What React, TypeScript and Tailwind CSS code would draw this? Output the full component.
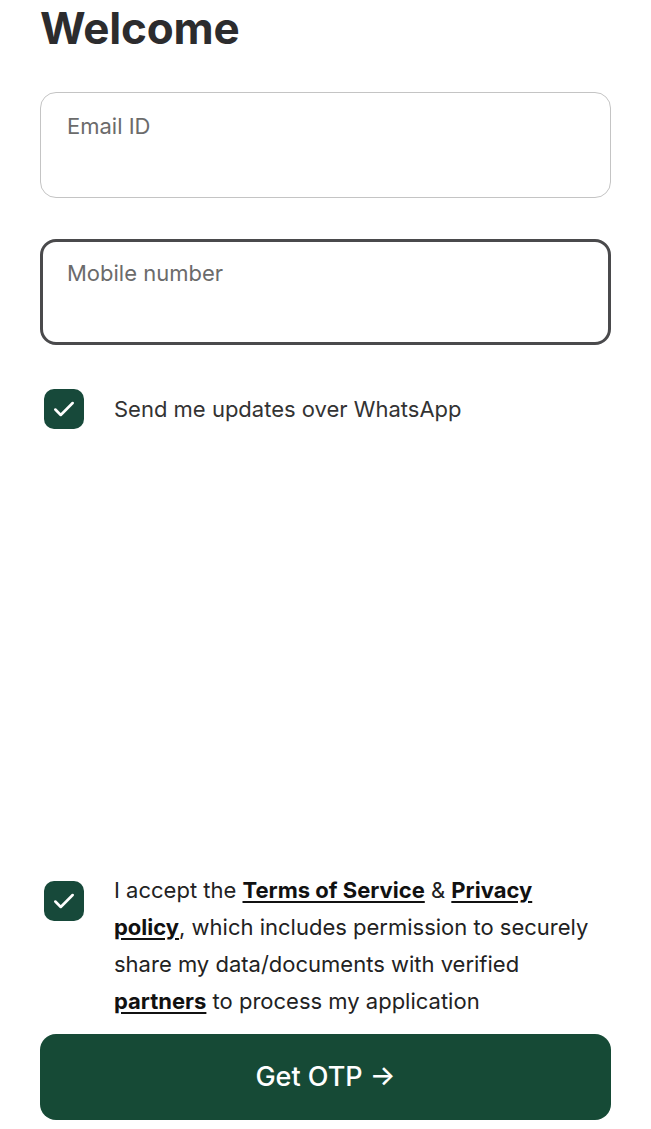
import React, { useState } from "react";

function CheckBox({ checked, onToggle }: { checked: boolean; onToggle: () => void }) {
  return (
    <button
      type="button"
      onClick={onToggle}
      className={`w-[40px] h-[40px] shrink-0 rounded-[10px] flex items-center justify-center ${
        checked ? "bg-[#17493a]" : "border-2 border-[#555] bg-white"
      }`}
    >
      {checked && (
        <svg width="26" height="26" viewBox="0 0 24 24" fill="none">
          <path
            d="M4 12.5l5 5L20 6.5"
            stroke="white"
            strokeWidth="2.4"
            strokeLinecap="round"
            strokeLinejoin="round"
          />
        </svg>
      )}
    </button>
  );
}

export default function App() {
  const [whatsapp, setWhatsapp] = useState(true);
  const [accept, setAccept] = useState(true);

  return (
    <div
      className="w-[651px] h-[1129px] bg-white flex flex-col px-[40px] text-[#2f2f31]"
      style={{ fontFamily: "Inter, 'Noto Sans', sans-serif" }}
    >
      <h1 className="text-[44px] font-bold leading-none mt-[6px] tracking-[-0.2px] text-[#2c2c2e]">
        Welcome
      </h1>

      <div className="mt-[42px] h-[106px] rounded-[16px] border border-[#c4c4c4] px-[26px] pt-[17px]">
        <input
          placeholder="Email ID"
          className="w-full text-[22px] outline-none placeholder:text-[#6b6b6b] bg-transparent"
        />
      </div>

      <div className="mt-[41px] h-[106px] rounded-[16px] border-[3px] border-[#4a4a4c] px-[24px] pt-[15px]">
        <input
          placeholder="Mobile number"
          className="w-full text-[22px] outline-none placeholder:text-[#6b6b6b] bg-transparent"
        />
      </div>

      <div className="mt-[44px] flex items-center gap-[30px] pl-[4px]">
        <CheckBox checked={whatsapp} onToggle={() => setWhatsapp(!whatsapp)} />
        <span className="text-[22px] text-[#333]">Send me updates over WhatsApp</span>
      </div>

      <div className="flex-1" />

      <div className="flex items-start gap-[30px] pl-[4px]">
        <CheckBox checked={accept} onToggle={() => setAccept(!accept)} />
        <p className="w-[482px] text-[22px] leading-[37px] text-[#222] -mt-[9px]">
          I accept the{" "}
          <a className="font-bold underline underline-offset-[3px] text-[#111]">Terms of Service</a> &amp;{" "}
          <a className="font-bold underline underline-offset-[3px] text-[#111]">Privacy policy</a>, which
          includes permission to securely share my data/documents with verified{" "}
          <a className="font-bold underline underline-offset-[3px] text-[#111]">partners</a> to process my
          application
        </p>
      </div>

      <button
        type="button"
        className="mt-[14px] mb-[9px] h-[86px] w-full rounded-[16px] bg-[#164a36] text-white text-[27px] font-medium flex items-center justify-center"
      >
        Get OTP →
      </button>
    </div>
  );
}
